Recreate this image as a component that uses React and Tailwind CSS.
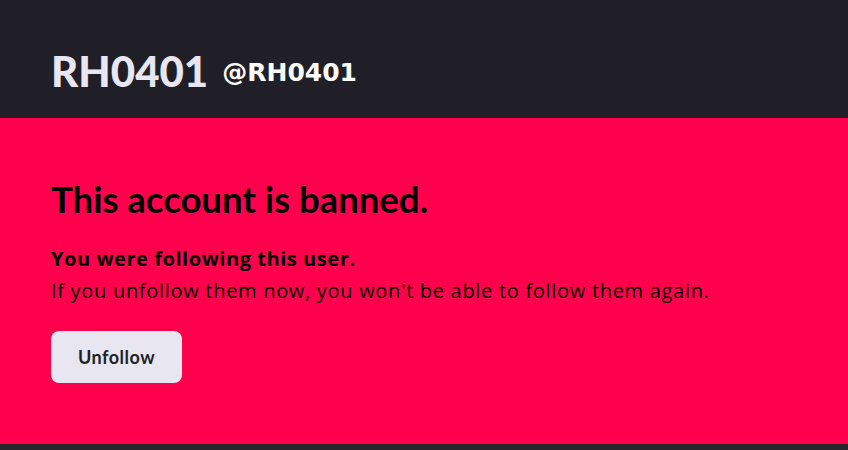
export default function App() {
  return (
    <div className="w-[848px] h-[450px] bg-[#27262d] flex flex-col">
      <header className="h-[118px] shrink-0 bg-[#201f28] flex items-start pl-[51px] pt-[50px] gap-[14px]">
        <span className="text-[42px] font-black text-[#e8e6f0] leading-none font-['Lato',sans-serif]">RH0401</span>
        <span className="mt-[10px] text-[25px] font-bold text-white leading-none font-['DejaVu_Sans',sans-serif]">@RH0401</span>
      </header>
      <main className="h-[326px] shrink-0 bg-[#ff004c] pl-[51px] pt-[59px] flex flex-col items-start">
        <h1 className="text-[36.5px] font-bold text-black leading-[44px] font-['Lato',sans-serif]">This account is banned.</h1>
        <p className="mt-[22px] text-[20px] font-bold text-black leading-[32px] tracking-[0.55px] font-['Open_Sans',sans-serif]">You were following this user.</p>
        <p className="text-[20px] text-black leading-[32px] tracking-[0.7px] font-['Open_Sans',sans-serif]">If you unfollow them now, you won't be able to follow them again.</p>
        <button className="mt-[24px] w-[131px] h-[52px] rounded-[8px] bg-[#e8e6f0] text-[#201f28] text-[18px] font-bold tracking-[0.5px] font-['Lato',sans-serif]">Unfollow</button>
      </main>
    </div>
  );
}
